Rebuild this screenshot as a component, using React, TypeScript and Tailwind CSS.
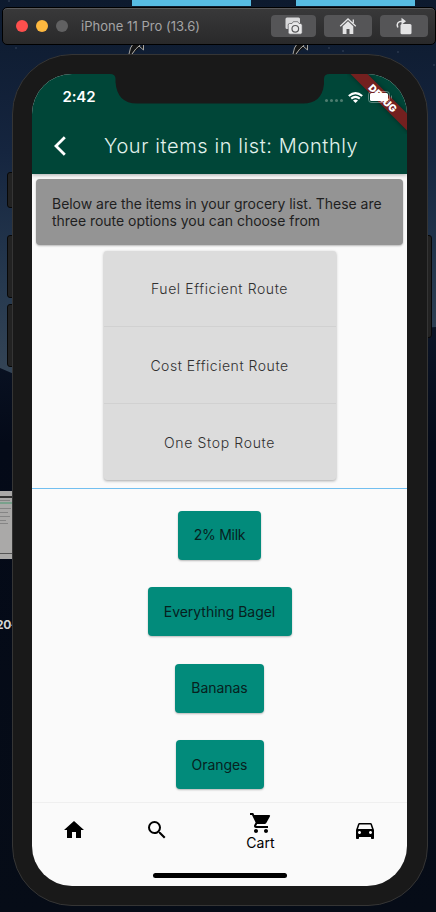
import {
  MdDirectionsCar,
  MdHome,
  MdSearch,
  MdShoppingCart,
} from "react-icons/md";

const routes = [
  { label: "Fuel Efficient Route", tracking: "tracking-[0.6px]" },
  { label: "Cost Efficient Route", tracking: "tracking-[0.53px]" },
  { label: "One Stop Route", tracking: "tracking-[0.65px]" },
];

const items = [
  { label: "2% Milk", width: "w-[83px]", tracking: "tracking-[-0.25px]" },
  { label: "Everything Bagel", width: "w-[144px]", tracking: "tracking-[-0.03px]" },
  { label: "Bananas", width: "w-[89px]", tracking: "tracking-[-0.05px]" },
  { label: "Oranges", width: "w-[88px]", tracking: "tracking-[-0.05px]" },
];

function Wallpaper() {
  return (
    <svg className="absolute inset-0" width="436" height="912" viewBox="0 0 436 912">
      <defs>
        <linearGradient id="sky" x1="0" y1="0" x2="0" y2="1">
          <stop offset="0" stopColor="#0d1a2e" />
          <stop offset="0.4" stopColor="#15253f" />
          <stop offset="0.75" stopColor="#26394f" />
          <stop offset="1" stopColor="#354556" />
        </linearGradient>
        <linearGradient id="hill" x1="0" y1="0" x2="0" y2="1">
          <stop offset="0" stopColor="#0b1426" />
          <stop offset="0.2" stopColor="#040a18" />
          <stop offset="1" stopColor="#060c17" />
        </linearGradient>
      </defs>
      <rect width="436" height="380" fill="url(#sky)" />
      <path d="M0 368L14 374L420 328L436 327V912H0Z" fill="url(#hill)" />
      <path d="M132 0H251V6H132ZM296 0H415V6H296Z" fill="#57bce3" />
      <g fill="#161616" stroke="#a7a6a3" strokeWidth="1">
        <path d="M129 54Q130 47 133 44H141L132 54" />
        <path d="M132 54Q136 48 139 46L143.5 50V45" />
        <path d="M293 54Q294 47 297 44H305L296 54" />
        <path d="M296 54Q300 48 303 46L307.5 50V45" />
      </g>
      <g fill="#46536a">
        <circle cx="9" cy="1" r=".7" />
        <circle cx="16" cy="48" r=".7" />
        <circle cx="329" cy="48" r=".7" />
        <circle cx="343" cy="51" r=".7" />
        <circle cx="398" cy="52" r=".7" />
        <circle cx="434" cy="65" r=".7" />
      </g>
      {/* thumbnail peeking out behind the phone */}
      <rect y="491" width="13" height="68" fill="#aaa9a8" />
      <rect y="496" width="13" height="2" fill="#333" />
      <rect y="502" width="13" height="2" fill="#79a18c" />
      <path d="M0 500.5H10M0 508.5H11M0 512.5H8M0 516.5H10M0 520.5H6M0 523.5H8" stroke="#858585" />
      <path d="M0 553.5H13" stroke="#555" />
    </svg>
  );
}

function TitleBar() {
  return (
    <div className="relative flex h-[38px] w-[434px] shrink-0 items-center rounded-[5px] border border-black bg-linear-to-b from-[#39393a] to-[#29292a] pl-[13px] pr-[7px] shadow-[inset_0_1px_0_#59595a]">
      <div className="flex gap-2">
        <span className="size-3 rounded-full bg-[#fe4f4d]" />
        <span className="size-3 rounded-full bg-[#feb83f]" />
        <span className="size-3 rounded-full bg-[#616162]" />
      </div>
      <span className="ml-[13px] whitespace-nowrap pt-px text-[13px] tracking-[0.03px] text-[#a4a4a5]">
        iPhone 11 Pro (13.6)
      </span>
      <div className="ml-auto flex gap-2">
        <span className="flex h-[22px] w-[45px] items-center justify-center rounded-[4px] bg-[#555557]">
          <svg width="18" height="18" viewBox="0 0 18 18">
            <path d="M2 .5H13.5Q15 .5 15 2V9H4V12H2Q.5 12 .5 10.5V2Q.5 .5 2 .5Z" fill="#d9d9da" />
            <path d="M4.5 6.5H7L8.3 4.7H12.7L14 6.5H15.5Q17.2 6.5 17.2 8.2V15.5Q17.2 17.2 15.5 17.2H5Q3.2 17.2 3.2 15.5V8.2Q3.2 6.5 4.5 6.5Z" fill="#e8e8e9" stroke="#555557" strokeWidth=".7" />
            <circle cx="10.3" cy="11.8" r="3.3" fill="none" stroke="#58585a" strokeWidth="1.2" />
          </svg>
        </span>
        <span className="flex h-[22px] w-12 items-center justify-center rounded-[4px] bg-[#555557]">
          <svg width="18" height="18" viewBox="0 0 18 18">
            <path d="M1.2 9.3L9 2L16.8 9.3M14.3 6V2.5" fill="none" stroke="#e4e4e5" strokeWidth="1.3" />
            <path d="M9 4.3L14.3 9.3V17H10.5V12H7.5V17H3.7V9.3Z" fill="#e4e4e5" />
          </svg>
        </span>
        <span className="flex h-[22px] w-12 items-center justify-center rounded-[4px] bg-[#555557]">
          <svg width="18" height="18" viewBox="0 0 18 18">
            <rect x="5.5" y="7" width="11" height="10.3" rx="1.5" fill="#e4e4e5" />
            <path d="M2.8 10.5Q.5 4.3 7.5 4.3" fill="none" stroke="#e4e4e5" strokeWidth="1.5" />
            <path d="M6.5 .8L11 4.3L6.5 7.8Z" fill="#e4e4e5" />
          </svg>
        </span>
      </div>
    </div>
  );
}

function StatusBar() {
  return (
    <div className="relative z-30 flex h-[44px] items-center justify-between pl-[30.5px] pr-[14px] pt-0.5 text-white">
      <span className="text-[15px] font-semibold tracking-[-0.15px]">2:42</span>
      <div className="flex items-center gap-[5px]">
        <div className="flex gap-0.5 pt-[7px]">
          <span className="size-[3px] rounded-full bg-[#4d7c6f]" />
          <span className="size-[3px] rounded-full bg-[#4d7c6f]" />
          <span className="size-[3px] rounded-full bg-[#4d7c6f]" />
          <span className="size-[3px] rounded-full bg-[#4d7c6f]" />
        </div>
        <svg width="15" height="11" viewBox="0 0 15 11" fill="none" stroke="#fff" strokeWidth="2.1">
          <path d="M.8 4Q7.5 -1.8 14.2 4M3.2 6.6Q7.5 3 11.8 6.6" />
          <path d="M7.5 11L5 8.4Q7.5 6.7 10 8.4Z" fill="#fff" stroke="none" />
        </svg>
        <svg width="25" height="12" viewBox="0 0 25 12">
          <rect x=".5" y=".5" width="21" height="11" rx="3" fill="none" stroke="#fff" strokeOpacity=".35" />
          <rect x="2" y="2" width="18" height="8" rx="1.5" fill="#fff" />
          <path d="M23 4Q25 6 23 8Z" fill="#fff" fillOpacity=".4" />
        </svg>
      </div>
    </div>
  );
}

function Notch() {
  return (
    <svg className="absolute left-[78px] top-0 z-20" width="220" height="30" viewBox="0 0 220 30">
      <path d="M0 0Q5.5 0 5.5 5V8Q7 29.5 27 29.5H193Q212 29.5 214 10V5Q214 0 219.5 0Z" fill="#191919" />
    </svg>
  );
}

function DebugBanner() {
  return (
    <div className="absolute right-0 top-0 z-20 size-[60px] overflow-hidden">
      <div className="absolute left-[-14px] top-[18px] flex h-3 w-[100px] rotate-45 items-center justify-center bg-[#73201f] text-[10px] font-black leading-none text-white shadow-[0_0_5px_#0006]">
        DEBUG
      </div>
    </div>
  );
}

function BottomNav() {
  return (
    <nav className="flex h-[84px] shrink-0 flex-col border-t border-[#efefef] text-black">
      <div className="flex h-[54px] items-center">
        <div className="flex w-[83px] justify-center">
          <MdHome size={24} />
        </div>
        <div className="flex w-[83px] justify-center">
          <MdSearch size={24} />
        </div>
        <div className="flex w-[125px] flex-col items-center pt-0.5">
          <MdShoppingCart size={24} />
          <span className="-mt-px text-[14px] leading-[17px] tracking-[0.1px]">Cart</span>
        </div>
        <div className="flex w-[84px] justify-center">
          <MdDirectionsCar size={24} />
        </div>
      </div>
      <span className="mx-auto mt-4 h-[5px] w-[134px] rounded-full bg-black" />
    </nav>
  );
}

function Screen() {
  return (
    <div className="relative flex h-[812px] w-[375px] flex-col overflow-hidden rounded-[40px] bg-[#fafafa]">
      <header className="relative h-[100px] shrink-0 bg-[#004638] shadow-[0_1px_4px_#0005]">
        <StatusBar />
        <div className="flex h-14 items-center">
          <svg className="ml-[22px]" width="12" height="20" viewBox="0 0 12 20">
            <path d="M10.8 1.2L2 10L10.8 18.8" fill="none" stroke="#fff" strokeWidth="2.8" />
          </svg>
          <h1 className="ml-[38px] whitespace-nowrap text-[20px] font-light tracking-[0.61px] text-[#e2f2ec]">
            Your items in list: Monthly
          </h1>
        </div>
      </header>
      <div className="mx-1 mt-[5px] h-[66px] shrink-0 rounded-[4px] bg-[#949494] px-4 pt-4 text-[14px] leading-[17px] tracking-[-0.03px] text-[#1f1f1f] shadow-[0_1px_2px_#0004]">
        <p className="whitespace-nowrap">
          Below are the items in your grocery list. These are
          <br />
          three route options you can choose from
        </p>
      </div>
      <div className="mx-auto mt-[5.5px] flex h-[229.5px] w-[232px] shrink-0 flex-col rounded-[3px] bg-[#dcdcdc] shadow-[0_1px_3px_#0005]">
        {routes.map((r) => (
          <div
            key={r.label}
            className={`flex flex-1 items-center justify-center border-b border-[#d1d1d1] text-[14px] font-light text-[#303030] last:border-0 ${r.tracking}`}
          >
            {r.label}
          </div>
        ))}
      </div>
      <div className="mt-2 h-px shrink-0 bg-[#72bff0]" />
      <div className="flex flex-1 flex-col items-center gap-[27.6px] pt-[21.6px]">
        {items.map((item) => (
          <div
            key={item.label}
            className={`flex h-[49px] shrink-0 items-center justify-center rounded-[4px] bg-[#028b7b] pb-px text-[14px] text-[#07211e] shadow-[0_1px_2px_#0004] ${item.width} ${item.tracking}`}
          >
            {item.label}
          </div>
        ))}
      </div>
      <BottomNav />
      <Notch />
      <DebugBanner />
    </div>
  );
}

export default function App() {
  return (
    <div className="relative flex h-[912px] w-[436px] flex-col overflow-hidden bg-[#050b18] pl-[2px] pt-[7px] font-['Inter',sans-serif]">
      <Wallpaper />
      <span className="absolute left-[-4px] top-[616px] text-[12px] font-bold tracking-[-0.4px] text-[#d4d4d4]">20-</span>
      <TitleBar />
      <div className="relative ml-[10px] mt-[9px] h-[852px] w-[416px] shrink-0">
        <span className="absolute left-[-5px] top-[118px] h-[36px] w-[8px] rounded-[3px] border border-[#080808] bg-[#222]" />
        <span className="absolute left-[-5px] top-[181px] h-[63px] w-[8px] rounded-[3px] border border-[#080808] bg-[#222]" />
        <span className="absolute left-[-5px] top-[250px] h-[63px] w-[8px] rounded-[3px] border border-[#080808] bg-[#222]" />
        <span className="absolute right-[-4px] top-[181px] h-[103px] w-[8px] rounded-[3px] border border-[#080808] bg-[#222]" />
        <div className="relative h-full rounded-[60px] border border-[#353535] bg-[#191919] pl-[19px] pt-[19px]">
          <Screen />
        </div>
      </div>
    </div>
  );
}
